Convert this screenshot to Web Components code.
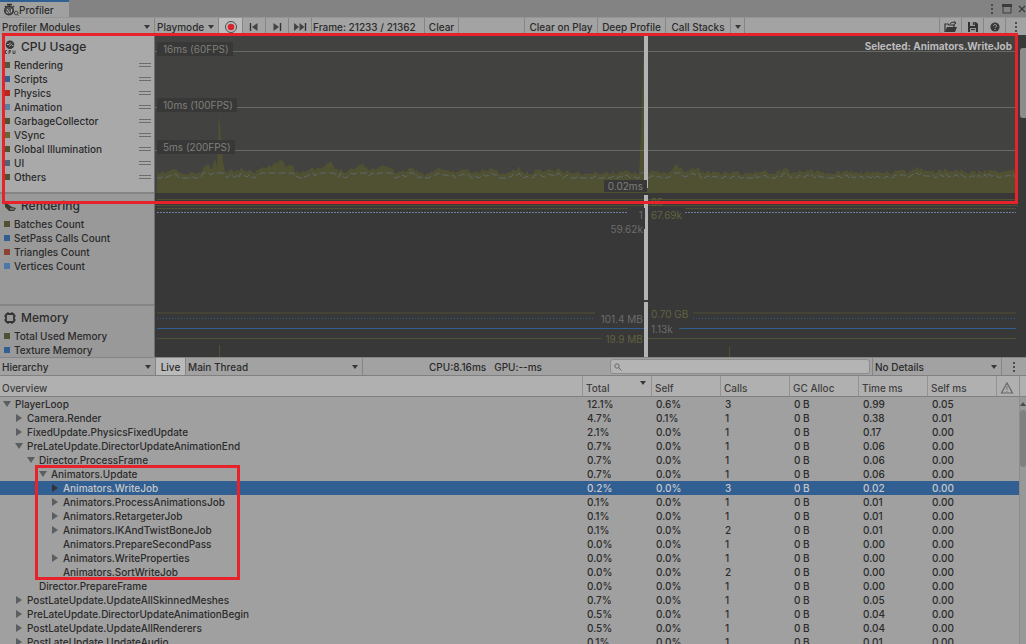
<!DOCTYPE html>
<html lang="en">
<head>
<meta charset="utf-8">
<title>Profiler</title>
<style>
  body { margin: 0; background: #a0a0a0; font-family: Inter, "Liberation Sans", sans-serif; font-size: 10px; font-weight: 500; line-height: 14px; color: #2b2b2b; }
</style>
</head>
<body>
<profiler-window></profiler-window>
<script>
const define = (name, html) => customElements.define(name, class extends HTMLElement {
  connectedCallback() {
    if (this.shadowRoot) return;
    const t = document.createElement('template');
    t.innerHTML = typeof html === 'function' ? html(this) : html;
    this.attachShadow({ mode: 'open' }).appendChild(t.content.cloneNode(true));
  }
});

/* ---------- icons ---------- */
const ICONS = {
  profiler: [16, 14, '<circle cx="6" cy="7.500" r="4.400" fill="#555"/><path d="M4 1.500h5M6.500 1v3M2 3l1.500 1.500M11 3L9.500 4.500" stroke="#333" stroke-width="1.300" fill="none"/><path d="M4 6l3 4M8.500 6v3M3 9l2 1" stroke="#b4b4b4" fill="none"/><circle cx="6" cy="7.500" r="4.400" fill="none" stroke="#333" stroke-width="1.200"/><circle cx="13.200" cy="10" r="1.800" fill="none" stroke="#444"/><path d="M14.200 11.200l1.400 1.600" stroke="#444"/>'],
  cpu: [14, 14, '<circle cx="7" cy="4.800" r="4.300" fill="#383838"/><path d="M4 4.500h2l1.500-2M9 5.500h1.500M6.500 6.500l2.500-3" stroke="#a9a9a9" stroke-width="1" fill="none"/><path d="M4 10.500H2.500v3H4M6 14v-3.500h1.500v1.500H6M10 10.500v3h2v-3" stroke="#444" fill="none"/>'],
  rendering: [14, 14, '<path d="M2 3l7 5 4 1-2 3H6L2 8z" fill="#3a3a33"/><path d="M1 5c2-3 5-3 6 0" stroke="#333" stroke-width="1.600" fill="none"/><path d="M7 10h4" stroke="#999"/>'],
  memory: [14, 14, '<rect x="3" y="3" width="8" height="8" rx="1" fill="none" stroke="#333" stroke-width="1.800"/><path d="M5 1v2M9 1v2M5 11v2M9 11v2M1 5h2M1 9h2M11 5h2M11 9h2" stroke="#333" stroke-width="1.200"/>'],
  record: [14, 14, '<circle cx="7" cy="7" r="5.500" fill="none" stroke="#4c4c4c" stroke-width="1"/><circle cx="7" cy="7" r="3.300" fill="#d8232a"/>'],
  prev: [12, 10, '<path d="M2.500 1v8" stroke="#333" stroke-width="1.400"/><path d="M9.500 1v8L4 5z" fill="#444"/>'],
  next: [12, 10, '<path d="M9.500 1v8" stroke="#333" stroke-width="1.400"/><path d="M2.500 1v8L8 5z" fill="#444"/>'],
  last: [14, 10, '<path d="M12.500 1v8" stroke="#333" stroke-width="1.400"/><path d="M1 1v8l5-4zM6.500 1v8l5-4z" fill="#444"/>'],
  open: [14, 12, '<path d="M1 11V3h3l1 1h5v2" fill="none" stroke="#333" stroke-width="1.200"/><path d="M1 11l2-5h10l-2 5z" fill="#383838"/><path d="M6 3c1-2 3-2 5-1M9.500 0l2.500 2-2.500 2" fill="none" stroke="#333"/>'],
  save: [12, 12, '<path d="M1 1h8l2 2v8H1z" fill="#333"/><path d="M3 1h5v4H3zM3 7h6v4H3z" fill="#999"/><path d="M6 1h1.500v3H6zM4 8h4v1H4z" fill="#333"/>'],
  help: [12, 12, '<circle cx="6" cy="6" r="4.600" fill="#383838"/><path d="M4.500 5c0-2 3-2 3 0 0 1-1.500 1-1.500 2M6 8v1" stroke="#aaa" fill="none"/>'],
  more: [4, 12, '<path d="M1 1h2v2H1zM1 5h2v2H1zM1 9h2v2H1z" fill="#4c4c4c"/>'],
  maximize: [10, 10, '<path d="M1 2h8v7H1z" fill="none" stroke="#3c3c3c"/><path d="M0 0h10v3H0z" fill="#3c3c3c"/>'],
  close: [8, 10, '<path d="M1 2l6 6M7 2L1 8" stroke="#3a3a3a" stroke-width="1.300"/>'],
  caret: [8, 6, '<path d="M1 1h6L4 5z" fill="#383838"/>'],
  expanded: [8, 8, '<path d="M0 1h8L4 7z" fill="#5a5e5e"/>'],
  collapsed: [8, 8, '<path d="M1 0v8l6-4z" fill="#5a5e5e"/>'],
  dark: [8, 8, '<path d="M1 0v8l6-4z" fill="#303438"/>'],
  leaf: [8, 8, ''],
  search: [8, 8, '<circle cx="3" cy="3" r="2.200" fill="none" stroke="#666"/><path d="M4.500 4.500L7.500 7.500" stroke="#666"/>'],
  warning: [14, 12, '<path d="M7 1l5.500 10h-11z" fill="none" stroke="#666" stroke-width="1.200"/><path d="M7 4v4M7 9v1" stroke="#777"/>'],
  up: [6, 4, '<path d="M0 4h6L3 0z" fill="#4a4a4a"/>'],
  grip: [12, 4, '<path d="M0 .5h12M0 3.500h12" stroke="#6c6c6c"/>']
};
define('pf-icon', el => {
  const [w, h, body] = ICONS[el.getAttribute('name')];
  return `<style>:host{display:inline-flex;flex:none}svg{display:block}</style><svg width="${w}" height="${h}" viewBox="0 0 ${w} ${h}" aria-hidden="true">${body}</svg>`;
});

/* ---------- toolbar controls ---------- */
define('pf-button', el => `<style>
  :host{display:flex;flex:none;border-right:1px solid #858585}
  button{flex:1;display:flex;align-items:center;justify-content:center;border:0;margin:0;padding:0 var(--pad,4px);background:var(--bg,none);font:inherit;color:inherit;white-space:nowrap}
</style><button type="button" aria-label="${el.getAttribute('label') || el.textContent.trim()}"><slot></slot></button>`);

define('pf-dropdown', el => `<style>
  :host{display:grid;align-items:center;border-right:1px solid #858585;box-sizing:border-box}
  select,pf-icon{grid-area:1/1}
  select{appearance:none;border:0;border-radius:0;margin:0;padding:0 12px 0 2px;background:none;font:inherit;color:inherit;width:100%;height:100%;min-width:0}
  pf-icon{justify-self:end;margin-right:3px;pointer-events:none}
</style><select aria-label="${el.getAttribute('label')}"><option>${el.getAttribute('value')}</option></select><pf-icon name="caret"></pf-icon>`);

define('pf-tabs', `<style>
  :host{display:flex;height:17px;background:#838383}
  .tab{box-sizing:border-box;width:69px;padding:0 3px;border-top:2px solid #315f92;background:#a0a0a0;display:flex;align-items:center}
  .win{margin-left:auto;display:flex;align-items:center;gap:8px}
  button{border:0;padding:0;margin:0;background:none;display:flex}
  button:last-child{margin-left:-2px}
</style>
<div class="tab"><pf-icon name="profiler"></pf-icon><span>Profiler</span></div>
<div class="win"><button aria-label="Window menu"><pf-icon name="more"></pf-icon></button><button aria-label="Maximize"><pf-icon name="maximize"></pf-icon></button><button aria-label="Close"><pf-icon name="close"></pf-icon></button></div>`);

define('pf-toolbar', `<style>
  :host{display:flex;height:18px;background:#a3a3a3;box-sizing:border-box;border-top:1px solid #959595}
  .modules{width:155px} .mode{width:64px}
  .rec{width:23px;--bg:#bcbcbc} .step{width:22px}
  .frame{width:111px;padding-left:1px;border-right:1px solid #858585;display:flex;align-items:center;white-space:nowrap}
  .gap{flex:1;max-width:65px;border-right:1px solid #858585}
  .fill{flex:1;border-right:1px solid #858585}
  .clear{width:33px}.play{width:72px}.deep{width:67px}.stacks{width:64px}.arrow{width:13px}
  .tool{width:21px} .menu{width:20px;border:0}
  pf-button{--pad:0}
</style>
<pf-dropdown class="modules" label="Profiler modules" value="Profiler Modules"></pf-dropdown>
<pf-dropdown class="mode" label="Target" value="Playmode"></pf-dropdown>
<pf-button class="rec" label="Record"><pf-icon name="record"></pf-icon></pf-button>
<pf-button class="step" label="Previous frame"><pf-icon name="prev"></pf-icon></pf-button>
<pf-button class="step" label="Next frame"><pf-icon name="next"></pf-icon></pf-button>
<pf-button class="step" label="Last frame"><pf-icon name="last"></pf-icon></pf-button>
<div class="frame">Frame: 21233 / 21362</div>
<pf-button class="clear">Clear</pf-button>
<div class="gap"></div>
<pf-button class="play">Clear on Play</pf-button>
<pf-button class="deep">Deep Profile</pf-button>
<pf-button class="stacks">Call Stacks</pf-button>
<pf-button class="arrow" label="Call stack options"><pf-icon name="caret"></pf-icon></pf-button>
<div class="fill"></div>
<pf-button class="tool" label="Load"><pf-icon name="open"></pf-icon></pf-button>
<pf-button class="tool" label="Save"><pf-icon name="save"></pf-icon></pf-button>
<pf-button class="tool" label="Help"><pf-icon name="help"></pf-icon></pf-button>
<pf-button class="menu" label="More"><pf-icon name="more"></pf-icon></pf-button>`);

/* ---------- modules ---------- */
define('pf-counter', el => `<style>
  :host{display:flex;align-items:center;gap:4px;height:14px;padding:0 3px 0 4px}
  i{width:6px;height:6px;background:${el.getAttribute('color')}}
  span{flex:1;white-space:nowrap}
</style><i></i><span><slot></slot></span>${el.hasAttribute('grip') ? '<pf-icon name="grip"></pf-icon>' : ''}`);

define('pf-module', el => `<style>
  :host{display:block;box-sizing:border-box;border-bottom:2px solid #848484;background:var(--bg,#999);flex:none}
  h2{margin:0;height:23px;padding-left:3px;display:flex;align-items:center;gap:4px;font-size:12px;font-weight:500;line-height:16px}
</style><h2><pf-icon name="${el.getAttribute('icon')}"></pf-icon>${el.getAttribute('name')}</h2><slot></slot>`);

/* ---------- chart ---------- */
const W = 863, H = 322;
function usage() {
  const keys = [[2,138],[11,137],[18,133],[27,138],[45,137],[53,127],[56,135],[60,123],[62,130],[63,104],[64,78],[65,78],[66,104],[67,121],[69,135],[78,135],[87,133],[98,136],[107,130],[110,133],[118,128],[126,125],[131,129],[138,129],[140,135],[152,135],[165,133],[176,126],[180,133],[192,135],[208,128],[215,134],[230,129],[240,136],[258,134],[270,138],[284,133],[298,136],[310,133],[316,137],[335,133],[350,138],[364,132],[370,138],[385,134],[402,134],[415,136],[430,138],[440,137],[485,136],[487,60],[489,1],[491,1],[492,135],[500,134],[508,138],[522,130],[530,136],[538,133],[552,136],[575,137],[590,138],[605,135],[620,137],[631,131],[636,137],[653,134],[672,137],[694,136],[712,137],[726,136],[736,136],[752,136],[762,132],[778,135],[797,134],[815,136],[830,135],[848,136],[855,132],[860,136]];
  let seed = 11;
  const rnd = () => (seed = (seed * 16807) % 2147483647) / 2147483647;
  let area = 'M2 158', line = '', k = 0;
  for (let x = 2; x <= 860; x += 2) {
    while (k < keys.length - 2 && keys[k + 1][0] < x) k++;
    const [x0, y0] = keys[k], [x1, y1] = keys[k + 1];
    const y = y0 + (y1 - y0) * (x - x0) / (x1 - x0);
    const n = y > 126 ? Math.round(rnd() * 4) - 1 : 0;
    area += `L${x} ${Math.round(y + n)}`;
    line += `${line ? 'L' : 'M'}${x} ${Math.round(Math.max(138, Math.min(143, y + 5 + n)))}`;
  }
  return [area + 'L860 158z', line];
}
const [area, line] = usage();
define('pf-chart', `<style>
  :host{display:block;position:relative;overflow:hidden;background:#383838}
  svg{display:block;width:100%;height:100%}
  span{position:absolute;white-space:nowrap;background:#383838;line-height:12px;padding:0 4px;color:#808078;font-weight:400}
  .g{left:2px;padding:1px 4px 1px 6px}
  .sel{right:6px;top:4px;color:#bcbcbc;font-weight:700;padding:0;line-height:14px;background:none}
  .l{right:43%} .r{left:57%}
  .l,.r{background:none}
  .o{color:#62623f}.w{color:#6c6c6c}
  .now{background:#383838}
</style>
<svg viewBox="0 0 ${W} ${H}" preserveAspectRatio="none" role="img" aria-label="Profiler frame charts">
  <path d="M0 0h863v158H0z" fill="#424241"/>
  <path d="${area}" fill="#505032"/>
  <path d="${line}" fill="none" stroke="#5d686c" stroke-width="1" stroke-dasharray="7 3"/>
  <path d="M0 16.500h863M0 72.500h863M0 115.500h863" stroke="#666a64"/>
  <path d="M860.500 0v158M2 164.500h859M0 170.500h863M2 173.500h471M530 173.500h331M2 278h438M538 278h323M2 303.500h445M493 303.500h368M64.500 310v12M574.500 312v10" stroke="#505032"/>
  <path d="M2 177.500h471M530 177.500h331" stroke="#6c7f96" stroke-dasharray="2 1"/>
  <path d="M2 283.500h437M538 283.500h323" stroke="#315f92" stroke-dasharray="1 2"/>
  <path d="M2 293.500h488M524 293.500h337" stroke="#315f92"/>
  <path d="M489 0h4v153h-4zM489 160h4v13h-4zM490 173h3v21h-3zM489 194h4v71h-4zM489 267h4v55h-4z" fill="#b4b4b4"/>
</svg>
<span class="g" style="top:7px">16ms (60FPS)</span>
<span class="g" style="top:63px">10ms (100FPS)</span>
<span class="g" style="top:105px">5ms (200FPS)</span>
<span class="sel">Selected: Animators.WriteJob</span>
<span class="l now" style="top:145px">0.02ms</span>
<span class="r o" style="top:161px">85</span>
<span class="r o" style="top:174px">67.69k</span>
<span class="l w" style="top:174px">1</span>
<span class="l w" style="top:188px">59.62k</span>
<span class="r o" style="top:273px">0.70 GB</span>
<span class="l w" style="top:278px">101.4 MB</span>
<span class="r w" style="top:288px">1.13k</span>
<span class="l o" style="top:298px">19.9 MB</span>`);

define('pf-modules', `<style>
  :host{display:grid;grid-template-columns:155px 1fr 8px;height:50vh;background:#383838;overflow:hidden}
  .list{display:flex;flex-direction:column;overflow:hidden;border-right:1px solid #707070}
  .cpu{--bg:#a9a9a9;height:159px}.ren{height:112px}.mem{height:112px}
  .thumb{margin:13px 0 0 2px;height:70px;background:#8c8c8c;border-radius:3px 0 0 3px}
</style>
<div class="list">
  <pf-module class="cpu" icon="cpu" name="CPU Usage">
    <pf-counter grip color="#55553a">Rendering</pf-counter>
    <pf-counter grip color="#315f92">Scripts</pf-counter>
    <pf-counter grip color="#b02a20">Physics</pf-counter>
    <pf-counter grip color="#5b7ea4">Animation</pf-counter>
    <pf-counter grip color="#50502f">GarbageCollector</pf-counter>
    <pf-counter grip color="#666632">VSync</pf-counter>
    <pf-counter grip color="#505032">Global Illumination</pf-counter>
    <pf-counter grip color="#4c6478">UI</pf-counter>
    <pf-counter grip color="#505032">Others</pf-counter>
  </pf-module>
  <pf-module class="ren" icon="rendering" name="Rendering">
    <pf-counter color="#505032">Batches Count</pf-counter>
    <pf-counter color="#315f92">SetPass Calls Count</pf-counter>
    <pf-counter color="#8f4034">Triangles Count</pf-counter>
    <pf-counter color="#4a78a8">Vertices Count</pf-counter>
  </pf-module>
  <pf-module class="mem" icon="memory" name="Memory">
    <pf-counter color="#505032">Total Used Memory</pf-counter>
    <pf-counter color="#315f92">Texture Memory</pf-counter>
  </pf-module>
</div>
<pf-chart></pf-chart>
<div class="thumb"></div>`);

/* ---------- hierarchy ---------- */
define('pf-view-bar', `<style>
  :host{display:flex;height:19px;box-sizing:border-box;background:#a2a2a2;border-top:1px solid #858585;border-bottom:1px solid #808080}
  .view{width:156px}.live{width:29px;--bg:#bababa;--pad:0}.thread{width:177px}
  .stats{flex:1;display:flex;align-items:center;justify-content:flex-end;gap:8px;padding-right:68px;white-space:nowrap}
  label{flex:none;width:260px;display:flex;align-items:center;gap:2px;background:#b4b4b4;border:1px solid #8c8c8c;border-radius:3px;box-sizing:border-box;padding-left:3px;margin:1px 2px 1px 0}
  input{flex:1;min-width:0;border:0;padding:0;background:none;font:inherit;outline:0;height:12px}
  .details{width:130px;border-left:1px solid #858585}
  .menu{width:24px;--pad:0;border:0}
</style>
<pf-dropdown class="view" label="View" value="Hierarchy"></pf-dropdown>
<pf-button class="live">Live</pf-button>
<pf-dropdown class="thread" label="Thread" value="Main Thread"></pf-dropdown>
<div class="stats"><span>CPU:8.16ms</span><span>GPU:--ms</span></div>
<label><pf-icon name="search"></pf-icon><input type="text" aria-label="Search"></label>
<pf-dropdown class="details" label="Details" value="No Details"></pf-dropdown>
<pf-button class="menu" label="More"><pf-icon name="more"></pf-icon></pf-button>`);

const ROWS = [
  [0,'expanded','PlayerLoop','12.1%','0.6%',3,'0.99','0.05'],
  [1,'collapsed','Camera.Render','4.7%','0.1%',1,'0.38','0.01'],
  [1,'collapsed','FixedUpdate.PhysicsFixedUpdate','2.1%','0.0%',1,'0.17','0.00'],
  [1,'expanded','PreLateUpdate.DirectorUpdateAnimationEnd','0.7%','0.0%',1,'0.06','0.00'],
  [2,'expanded','Director.ProcessFrame','0.7%','0.0%',1,'0.06','0.00'],
  [3,'expanded','Animators.Update','0.7%','0.0%',1,'0.06','0.00'],
  [4,'dark','Animators.WriteJob','0.2%','0.0%',3,'0.02','0.00'],
  [4,'collapsed','Animators.ProcessAnimationsJob','0.1%','0.0%',1,'0.01','0.00'],
  [4,'collapsed','Animators.RetargeterJob','0.1%','0.0%',1,'0.01','0.00'],
  [4,'collapsed','Animators.IKAndTwistBoneJob','0.1%','0.0%',2,'0.01','0.00'],
  [4,'leaf','Animators.PrepareSecondPass','0.0%','0.0%',1,'0.00','0.00'],
  [4,'collapsed','Animators.WriteProperties','0.0%','0.0%',1,'0.00','0.00'],
  [4,'leaf','Animators.SortWriteJob','0.0%','0.0%',2,'0.00','0.00'],
  [2,'leaf','Director.PrepareFrame','0.0%','0.0%',1,'0.00','0.00'],
  [1,'collapsed','PostLateUpdate.UpdateAllSkinnedMeshes','0.7%','0.0%',1,'0.05','0.00'],
  [1,'collapsed','PreLateUpdate.DirectorUpdateAnimationBegin','0.5%','0.0%',1,'0.04','0.00'],
  [1,'collapsed','PostLateUpdate.UpdateAllRenderers','0.5%','0.0%',1,'0.04','0.00'],
  [1,'collapsed','PostLateUpdate.UpdateAudio','0.1%','0.0%',1,'0.01','0.00']
];
define('pf-tree-table', `<style>
  :host{display:grid;grid-template-columns:1fr 7px;flex:1;min-height:0;overflow:hidden;background:#a0a0a0}
  table{border-collapse:separate;border-spacing:0;table-layout:fixed;width:100%;align-self:start}
  th{height:21px;box-sizing:border-box;padding:3px 0 0 3px;text-align:left;font-weight:inherit;background:#b0b0b0;border-bottom:1px solid #808080;color:#404040;line-height:16px;vertical-align:middle}
  th:first-child{padding-left:2px}
  th+th{border-left:1px solid #929292}
  .hd{display:flex;justify-content:space-between;align-items:center}
  .hd pf-icon{align-self:start;margin-right:4px}
  .warn{display:flex;align-items:center;height:16px}
  td{height:14px;padding:0 0 0 5px;white-space:nowrap;line-height:14px}
  .name{display:flex;align-items:center;gap:4px}
  .sel td{background:#315f92;color:#c8c8c8}
  .c{width:69px}.w{width:23px}
  .bar{background:#989898;display:flex;flex-direction:column;align-items:center;border-left:1px solid #8c8c8c}
  .top{height:20px;align-self:stretch;background:#b0b0b0;border-bottom:1px solid #808080;margin-bottom:5px}
  .thumb{margin-top:4px;height:57px;align-self:stretch;background:#808080;border-radius:3px}
</style>
<table>
  <colgroup><col><col class="c"><col class="c"><col class="c"><col class="c"><col class="c"><col class="c"><col class="w"></colgroup>
  <thead><tr><th>Overview</th><th><div class="hd">Total<pf-icon name="caret"></pf-icon></div></th><th>Self</th><th>Calls</th><th>GC Alloc</th><th>Time ms</th><th>Self ms</th><th aria-label="Warnings"><div class="warn"><pf-icon name="warning"></pf-icon></div></th></tr></thead>
  <tbody>${ROWS.map((r, i) => `<tr${i === 6 ? ' class="sel"' : ''}><td style="padding-left:${3 + r[0] * 12}px"><div class="name"><pf-icon name="${r[1]}"></pf-icon>${r[2]}</div></td><td>${r[3]}</td><td>${r[4]}</td><td>${r[5]}</td><td>0 B</td><td>${r[6]}</td><td>${r[7]}</td><td></td></tr>`).join('')}</tbody>
</table>
<div class="bar"><div class="top"></div><pf-icon name="up"></pf-icon><div class="thumb"></div></div>`);

/* ---------- window ---------- */
define('profiler-window', `<style>
  :host{display:flex;flex-direction:column;height:100vh;position:relative;overflow:hidden}
  .mark{position:absolute;box-sizing:border-box;border:3px solid #e8222b;pointer-events:none}
  .charts{left:2px;right:8px;top:33px;height:171px}
  .jobs{left:35px;top:465px;width:205px;height:115px}
</style>
<pf-tabs></pf-tabs>
<pf-toolbar></pf-toolbar>
<pf-modules></pf-modules>
<pf-view-bar></pf-view-bar>
<pf-tree-table></pf-tree-table>
<div class="mark charts"></div>
<div class="mark jobs"></div>`);
</script>
</body>
</html>
